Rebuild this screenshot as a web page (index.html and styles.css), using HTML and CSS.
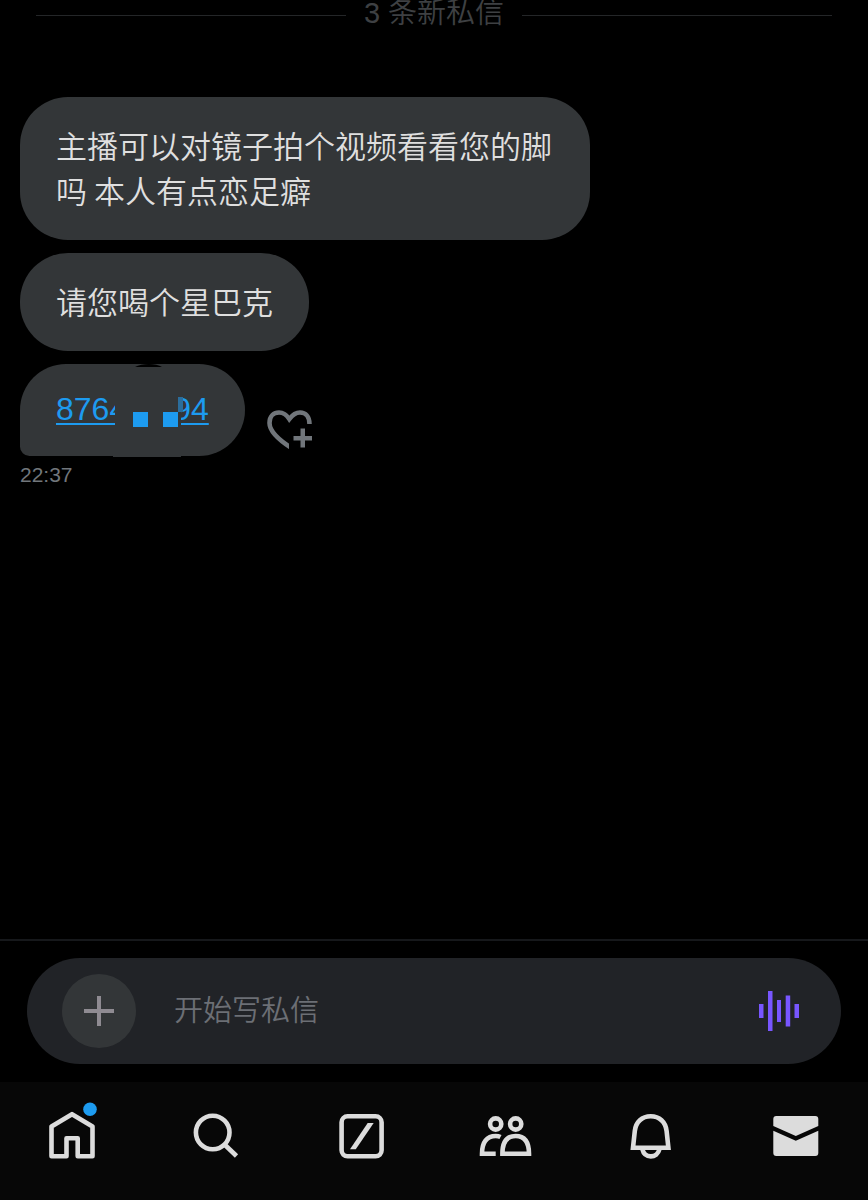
FILE: index.html
```html
<!DOCTYPE html>
<html lang="zh-CN">
<head>
    <meta charset="UTF-8">
    <meta name="viewport" content="width=device-width, initial-scale=1.0">
    <title>私信</title>
    <link rel="stylesheet" href="styles.css">
</head>
<body>
    <main class="messages">
        <div class="new-divider"><span>3 条新私信</span></div>

        <div class="thread">
            <div class="bubble">主播可以对镜子拍个视频看看您的脚吗 本人有点恋足癖</div>
            <div class="bubble">请您喝个星巴克</div>
            <div class="message-row">
                <div class="bubble last">
                    <a href="#" class="number"><span>8764</span><span>94</span></a>
                    <svg class="patch" viewBox="0 0 68 94" aria-hidden="true">
                        <path class="patch-fill" d="M2 26H68V93H0V90H2z"/>
                        <path class="patch-notch" d="M22 3C29-1 43-1 49 3z"/>
                        <path class="patch-block" d="M20 48h15v15H20zM50 48h15v15H50z"/>
                        <path class="patch-dim" d="M65 33h5v15h-5z"/>
                    </svg>
                </div>
                <button type="button" class="react" aria-label="添加反应">
                    <svg viewBox="0 0 46 40">
                        <clipPath id="heart-cut"><path d="M0 0H46V16H22V40H0z"/></clipPath>
                        <path class="line" clip-path="url(#heart-cut)" d="M26 39C10 29 2.500 20.500 2.500 13C2.500 6 7 2.500 12 2.500C17 2.500 20 5.500 22.300 9C25 5.500 28 2.500 33 2.500C38.500 2.500 42.500 6.500 42.500 14"/>
                        <path class="solid" d="M33.500 18.500h4.500v7.500h7v4.500h-7v7h-4.500v-7h-7v-4.500h7z"/>
                    </svg>
                </button>
            </div>
        </div>
        <time class="time">22:37</time>
    </main>

    <form class="composer">
        <div class="composer-box">
            <button type="button" class="add" aria-label="添加">
                <svg viewBox="0 0 30 30"><path d="M13 0h4v13h13v4H17v13h-4V17H0v-4h13z"/></svg>
            </button>
            <input type="text" class="composer-input" placeholder="开始写私信" aria-label="开始写私信">
            <button type="button" class="voice" aria-label="语音">
                <svg viewBox="0 0 40 40"><path d="M0 13h4.500v14H0zM9 0h4.500v40H9zM18 9h4v22h-4zM26.700 4.500h4.500v31h-4.500zM35.500 13H40v14h-4.500z"/></svg>
            </button>
        </div>
    </form>

    <nav class="tabs">
        <a href="#" aria-label="主页">
            <svg viewBox="0 0 54 54">
                <path class="line round" d="M6.500 17.500L27 5.200L47.500 17.500V47.300H32.700V29.200H21.500V47.300H6.500z"/>
                <circle class="dot" cx="45" cy="0.300" r="6.800"/>
            </svg>
        </a>
        <a href="#" aria-label="搜索">
            <svg viewBox="0 0 54 54">
                <circle class="line" cx="22.700" cy="23.500" r="16.800"/>
                <path class="line" d="M34.500 35.500L46.500 47"/>
            </svg>
        </a>
        <a href="#" aria-label="Grok">
            <svg viewBox="0 0 54 54">
                <rect class="line" x="6.600" y="7.300" width="40" height="40" rx="6"/>
                <path class="solid" d="M15 40.300h5.800L38.700 14h-6z"/>
            </svg>
        </a>
        <a href="#" aria-label="社群">
            <svg viewBox="0 0 54 54">
                <circle class="line" cx="16.700" cy="15" r="5.600"/>
                <circle class="line" cx="36.700" cy="15" r="5.600"/>
                <path class="line" d="M23.400 44.800C23.400 33 28 27 36.700 27S50 33 50 44.800z"/>
                <path class="line" d="M16.700 44.800H3C3 33 8 27 16.700 27Q19.500 27 21.500 28"/>
            </svg>
        </a>
        <a href="#" aria-label="通知">
            <svg viewBox="0 0 54 54">
                <path class="line" d="M9 38.800L10.800 22C11.800 13 18 7.300 26.700 7.300S41.600 13 42.600 22L44.400 38.800z"/>
                <path class="line" d="M18.300 40C19.500 45 23 47.400 26.800 47.400S34.300 45 35.500 40"/>
            </svg>
        </a>
        <a href="#" aria-label="私信">
            <svg viewBox="0 0 54 54">
                <path class="solid" d="M4.300 17V10Q4.300 7 7.300 7H46.300Q49.300 7 49.300 10V17L26.800 27zM4.300 21.700L26.800 31.800L49.300 21.700V44Q49.300 47 46.300 47H7.300Q4.300 47 4.300 44z"/>
            </svg>
        </a>
    </nav>
</body>
</html>
```

FILE: styles.css
```css
* {
    margin: 0;
    padding: 0;
    box-sizing: border-box;
}

body {
    display: flex;
    flex-direction: column;
    min-height: 100vh;
    background: #000;
    color: #dfdfdf;
    font-family: "Liberation Sans", "Noto Sans CJK SC", sans-serif;
}

button {
    border: none;
    background: none;
    cursor: pointer;
}

svg {
    display: block;
    overflow: visible;
}

.line {
    fill: none;
    stroke: currentColor;
    stroke-width: 4.6;
}

.line.round {
    stroke-linejoin: round;
}

.solid {
    fill: currentColor;
}

.messages {
    flex: 1;
}

.new-divider {
    display: flex;
    gap: 18px;
    height: 97px;
    padding: 0 36px;
    color: #3e4043;
    font-size: 29px;
    font-weight: 350;
    line-height: 26px;
}

.new-divider::before,
.new-divider::after {
    content: "";
    flex: 1;
    height: 1px;
    margin-top: 15px;
    background: #242628;
}

.thread {
    display: flex;
    flex-direction: column;
    align-items: flex-start;
    gap: 13px;
    padding: 0 20px;
}

.bubble {
    max-width: 570px;
    padding: 25px 36px 28px;
    border-radius: 48px;
    background: #333638;
    font-family: "Noto Sans CJK SC", sans-serif;
    font-size: 31px;
    font-weight: 350;
    line-height: 45px;
}

.message-row {
    display: flex;
    align-items: flex-end;
    gap: 22px;
}

.bubble.last {
    position: relative;
    padding: 26px 36px 27px;
    border-bottom-left-radius: 10px;
    font-family: "Liberation Sans", sans-serif;
    font-size: 32px;
    line-height: 39px;
}

.number {
    display: flex;
    gap: 46px;
    color: #1d9bf0;
    text-decoration: underline;
    text-decoration-thickness: 2px;
    text-underline-offset: 3px;
}

/* covers the middle of the number */
.patch {
    position: absolute;
    top: 0;
    left: 93px;
    width: 68px;
    height: 94px;
}

.patch-fill {
    fill: #333638;
}

.patch-notch {
    fill: #000;
}

.patch-block {
    fill: #1d9bf0;
}

.patch-dim {
    fill: #2b6d9c;
}

.react {
    margin-bottom: 6px;
    color: #71767b;
}

.react svg {
    width: 46px;
    height: 40px;
}

.time {
    display: block;
    padding: 7px 20px;
    color: #71767b;
    font-size: 21px;
    line-height: 24px;
}

.composer {
    padding: 17px 27px 18px;
    border-top: 2px solid #16181b;
}

.composer-box {
    display: flex;
    align-items: center;
    height: 106px;
    padding: 0 42px 0 35px;
    border-radius: 53px;
    background: #212327;
}

.add {
    display: flex;
    align-items: center;
    justify-content: center;
    width: 74px;
    height: 74px;
    border-radius: 50%;
    background: #333638;
}

.add svg {
    width: 30px;
    height: 30px;
    fill: #8f8b92;
}

.composer-input {
    flex: 1;
    min-width: 0;
    margin: 0 38px;
    border: none;
    outline: none;
    background: none;
    color: #dfdfdf;
    font-family: inherit;
    font-size: 29px;
    font-weight: 350;
    line-height: 44px;
}

.composer-input::placeholder {
    color: #6c6f75;
}

.voice svg {
    width: 40px;
    height: 40px;
    fill: #7856ff;
}

.tabs {
    display: flex;
    padding: 27px 0 37px;
    background: #070707;
}

.tabs a {
    display: flex;
    flex: 1;
    justify-content: center;
    color: #dcdcdc;
}

.tabs svg {
    width: 54px;
    height: 54px;
}

.dot {
    fill: #1d9bf0;
}
```
